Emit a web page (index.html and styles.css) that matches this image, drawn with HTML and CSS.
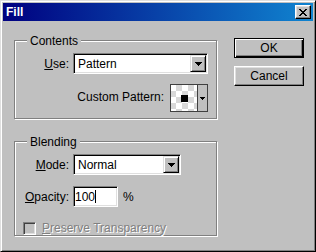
FILE: index.html
```html
<!DOCTYPE html>
<html lang="en">
<head>
    <meta charset="UTF-8">
    <meta name="viewport" content="width=device-width, initial-scale=1.0">
    <title>Fill</title>
    <link rel="stylesheet" href="styles.css">
</head>
<body>
    <div class="window">
        <div class="titlebar">
            <span class="title">Fill</span>
            <div class="close-btn">
                <svg width="8" height="7" viewBox="0 0 8 7" shape-rendering="crispEdges"><path d="M0 0h2v1H0zM6 0h2v1H6zM1 1h2v1H1zM5 1h2v1H5zM2 2h4v1H2zM3 3h2v1H3zM2 4h4v1H2zM1 5h2v1H1zM5 5h2v1H5zM0 6h2v1H0zM6 6h2v1H6z"/></svg>
            </div>
        </div>

        <div class="client">
            <div class="groups">
                <div class="group contents">
                    <div class="group-title">Contents</div>
                    <div class="row use-row">
                        <span><u>U</u>se:</span>
                        <div class="field select use-select">
                            <span class="value">Pattern</span>
                            <div class="drop-btn">
                                <svg width="7" height="4" viewBox="0 0 7 4" shape-rendering="crispEdges"><path d="M0 0h7v1H0zM1 1h5v1H1zM2 2h3v1H2zM3 3h1v1H3z"/></svg>
                            </div>
                        </div>
                    </div>
                    <div class="row pattern-row">
                        <span class="pattern-label">Custom Pattern:</span>
                        <div class="pattern-picker">
                            <div class="swatch"><div class="dot"></div></div>
                            <div class="picker-arrow">
                                <svg width="5" height="3" viewBox="0 0 5 3" shape-rendering="crispEdges"><path d="M0 0h5v1H0zM1 1h3v1H1zM2 2h1v1H2z"/></svg>
                            </div>
                        </div>
                    </div>
                </div>

                <div class="group blending">
                    <div class="group-title">Blending</div>
                    <div class="blend-grid">
                        <span class="label"><u>M</u>ode:</span>
                        <div class="field select mode-select">
                            <span class="value">Normal</span>
                            <div class="drop-btn">
                                <svg width="7" height="4" viewBox="0 0 7 4" shape-rendering="crispEdges"><path d="M0 0h7v1H0zM1 1h5v1H1zM2 2h3v1H2zM3 3h1v1H3z"/></svg>
                            </div>
                        </div>
                        <span class="label"><u>O</u>pacity:</span>
                        <div class="opacity">
                            <div class="field text-input"><span>100</span><span class="caret"></span></div>
                            <span>%</span>
                        </div>
                    </div>
                    <div class="check-row">
                        <div class="checkbox"></div>
                        <span class="disabled"><u>P</u>reserve Transparency</span>
                    </div>
                </div>
            </div>

            <div class="buttons">
                <button class="btn default">OK</button>
                <button class="btn">Cancel</button>
            </div>
        </div>
    </div>
</body>
</html>
```

FILE: styles.css
```css
* {
    margin: 0;
    padding: 0;
    box-sizing: border-box;
}

body {
    font-family: "Liberation Sans", Arial, sans-serif;
    font-size: 12px;
    line-height: 14px;
    color: #000;
    background: #c0c0c0;
}

.window {
    width: 316px;
    height: 252px;
    background: #c0c0c0;
    border: 1px solid;
    border-color: #dfdfdf #000 #000 #dfdfdf;
    box-shadow: inset 1px 1px #fff, inset -1px -1px #808080;
    padding: 2px;
}

.titlebar {
    height: 18px;
    display: flex;
    align-items: center;
    justify-content: space-between;
    padding: 0 2px 0 3px;
    background: linear-gradient(to right, #000080, #1084d0);
}

.title {
    color: #fff;
    font-weight: bold;
}

.close-btn {
    width: 16px;
    height: 14px;
    background: #c0c0c0;
    border: 1px solid;
    border-color: #fff #000 #000 #fff;
    box-shadow: inset -1px -1px #808080, inset 1px 1px #dfdfdf;
    display: flex;
    align-items: center;
    justify-content: center;
}

.client {
    display: flex;
    align-items: flex-start;
    padding: 17px 0 0 11px;
}

.groups {
    width: 203px;
    padding-top: 2px;
    display: flex;
    flex-direction: column;
    gap: 22px;
}

.group {
    border: 1px solid #808080;
    box-shadow: inset 1px 1px #fff, 1px 1px #fff;
}

.contents {
    height: 79px;
}

.blending {
    height: 95px;
}

.group-title {
    width: max-content;
    margin: -7px 0 5px 12px;
    padding: 0 3px;
    background: #c0c0c0;
}

.row {
    display: flex;
    align-items: center;
    justify-content: flex-end;
    padding-right: 8px;
}

.use-row {
    gap: 4px;
}

.pattern-row {
    gap: 6px;
    margin-top: 10px;
}

.pattern-label {
    margin-bottom: 3px;
}

/* sunken edit / combo boxes */
.field {
    height: 21px;
    background: #fff;
    border: 1px solid;
    border-color: #808080 #fff #fff #808080;
    box-shadow: inset 1px 1px #000, inset -1px -1px #dfdfdf;
    display: flex;
    align-items: center;
}

.select {
    padding: 1px 1px 1px 4px;
}

.use-select {
    width: 135px;
}

.mode-select {
    width: 108px;
}

.drop-btn {
    width: 16px;
    height: 100%;
    margin-left: auto;
    background: #c0c0c0;
    border: 1px solid;
    border-color: #dfdfdf #000 #000 #dfdfdf;
    box-shadow: inset 1px 1px #fff, inset -1px -1px #808080;
    display: flex;
    align-items: center;
    justify-content: center;
    padding: 1px 0 0 1px;
}

.pattern-picker {
    width: 38px;
    height: 28px;
    display: flex;
    border: 1px solid #404040;
    background: #c0c0c0;
}

.swatch {
    width: 27px;
    border-right: 1px solid #404040;
    background: repeating-conic-gradient(#d8d8d8 0 25%, #fff 0 50%) -1px 0 / 12px 12px;
    display: flex;
    align-items: center;
    justify-content: center;
}

.dot {
    width: 7px;
    height: 7px;
    background: #000;
}

.picker-arrow {
    flex: 1;
    display: flex;
    align-items: center;
    justify-content: center;
}

.blend-grid {
    display: grid;
    grid-template-columns: 54px max-content;
    column-gap: 4px;
    row-gap: 11px;
    align-items: center;
}

.label {
    text-align: right;
}

.opacity {
    display: flex;
    align-items: center;
    gap: 5px;
}

.text-input {
    width: 45px;
    padding-left: 1px;
}

.caret {
    width: 1px;
    height: 13px;
    background: #000;
}

.check-row {
    display: flex;
    align-items: center;
    gap: 6px;
    margin: 14px 0 0 8px;
}

.checkbox {
    width: 13px;
    height: 13px;
    background: #c0c0c0;
    border: 1px solid;
    border-color: #808080 #fff #fff #808080;
    box-shadow: inset 1px 1px #404040, inset -1px -1px #dfdfdf;
}

.disabled {
    color: #808080;
    text-shadow: 1px 1px #fff;
}

.buttons {
    display: flex;
    flex-direction: column;
    gap: 8px;
    margin-left: 17px;
}

.btn {
    width: 70px;
    height: 20px;
    font: inherit;
    color: #000;
    background: #c0c0c0;
    border: 1px solid;
    border-color: #fff #000 #000 #fff;
    box-shadow: inset -1px -1px #808080, inset 1px 1px #dfdfdf;
}

.btn.default {
    border-color: #000;
    box-shadow: inset 1px 1px #fff, inset -1px -1px #000, inset -2px -2px #808080;
}
```
